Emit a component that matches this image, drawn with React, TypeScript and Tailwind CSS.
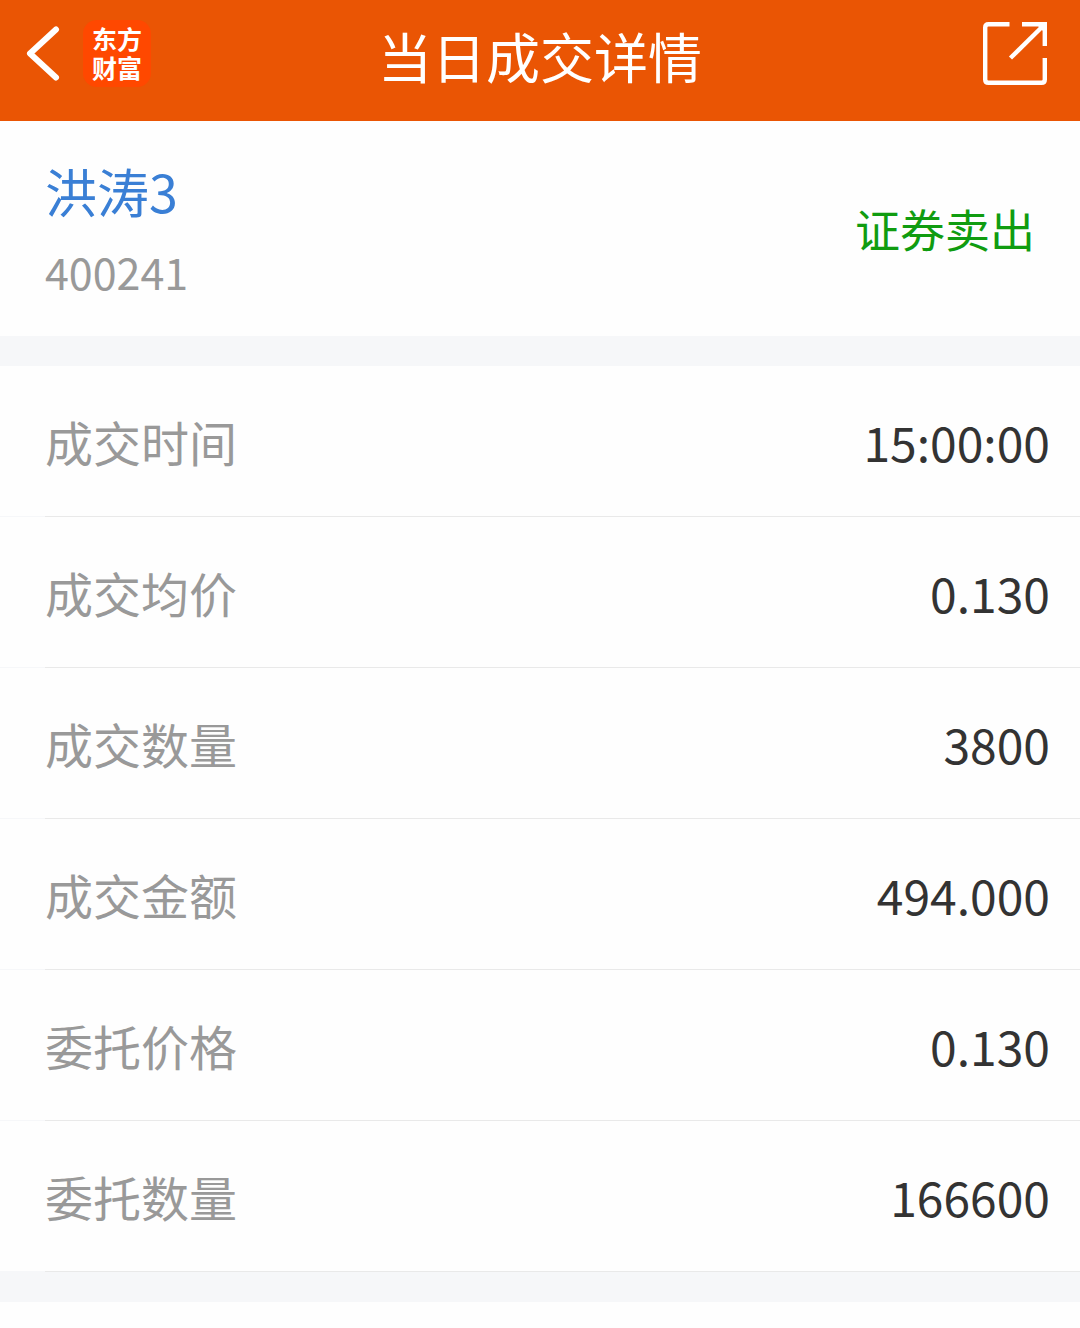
import React from 'react'

const details = [
  { label: '成交时间', value: '15:00:00' },
  { label: '成交均价', value: '0.130' },
  { label: '成交数量', value: '3800' },
  { label: '成交金额', value: '494.000' },
  { label: '委托价格', value: '0.130' },
  { label: '委托数量', value: '166600' },
]

function Header() {
  return (
    <header className="grid grid-cols-[1fr_auto_1fr] items-start bg-[#ea5504] h-[121px] pt-5 text-white">
      <div className="flex items-start gap-[23px] pl-6">
        <button type="button" aria-label="返回" className="cursor-pointer">
          <svg width="36" height="68" viewBox="0 0 36 68" fill="none" stroke="currentColor" strokeWidth="6">
            <path d="M32 9.5L6 33.5L32 57.5" strokeLinecap="round" strokeLinejoin="round" />
          </svg>
        </button>
        <div className="flex justify-center w-[68px] h-[67px] pt-1 rounded-[14px] bg-[#ff4800]">
          <p className="w-[50px] text-[25px] leading-[29px] font-bold">东方财富</p>
        </div>
      </div>
      <h1 className="text-[54px] leading-[72px]">当日成交详情</h1>
      <button type="button" aria-label="分享" className="justify-self-end mr-8 cursor-pointer">
        <svg width="66" height="68" viewBox="0 0 66 68" fill="none" stroke="currentColor" strokeWidth="4.4">
          <path d="M27.5 4.2H6.5Q3.2 4.2 3.2 7.5V59.5Q3.2 62.8 6.5 62.8H59.5Q62.8 62.8 62.8 59.5V38" />
          <path d="M40 4.2H62.8V26" />
          <path d="M28.5 38L62 5" />
          <path d="M55 5H63V13Z" fill="currentColor" stroke="none" />
        </svg>
      </button>
    </header>
  )
}

export default function App() {
  return (
    <div className="w-full min-h-screen bg-[#fefefe] font-['Noto_Sans_CJK_SC',sans-serif]">
      <Header />
      <section className="flex items-center justify-between h-[215px] px-[45px]">
        <div className="pt-1">
          <h2 className="text-[52px] leading-[80px] text-[#3a7fd5]">洪涛3</h2>
          <p className="text-[43px] leading-[80px] text-[#999999]">400241</p>
        </div>
        <p className="text-[45px] leading-[64px] text-[#109c10]">证券卖出</p>
      </section>
      <div className="h-[30px] bg-[#f6f7f9]" />
      <dl>
        {details.map((item) => (
          <div key={item.label}>
            <div className="flex items-center justify-between h-[150px] pl-[45px] pr-[30px] text-[48px]">
              <dt className="text-[#999999]">{item.label}</dt>
              <dd className="text-[#333333]">{item.value}</dd>
            </div>
            <div className="flex h-px">
              <span className="w-[45px] bg-[#f6f7f9]" />
              <span className="flex-1 bg-[#e9e9e9]" />
            </div>
          </div>
        ))}
      </dl>
      <div className="h-[30px] bg-[#f6f7f9]" />
    </div>
  )
}
